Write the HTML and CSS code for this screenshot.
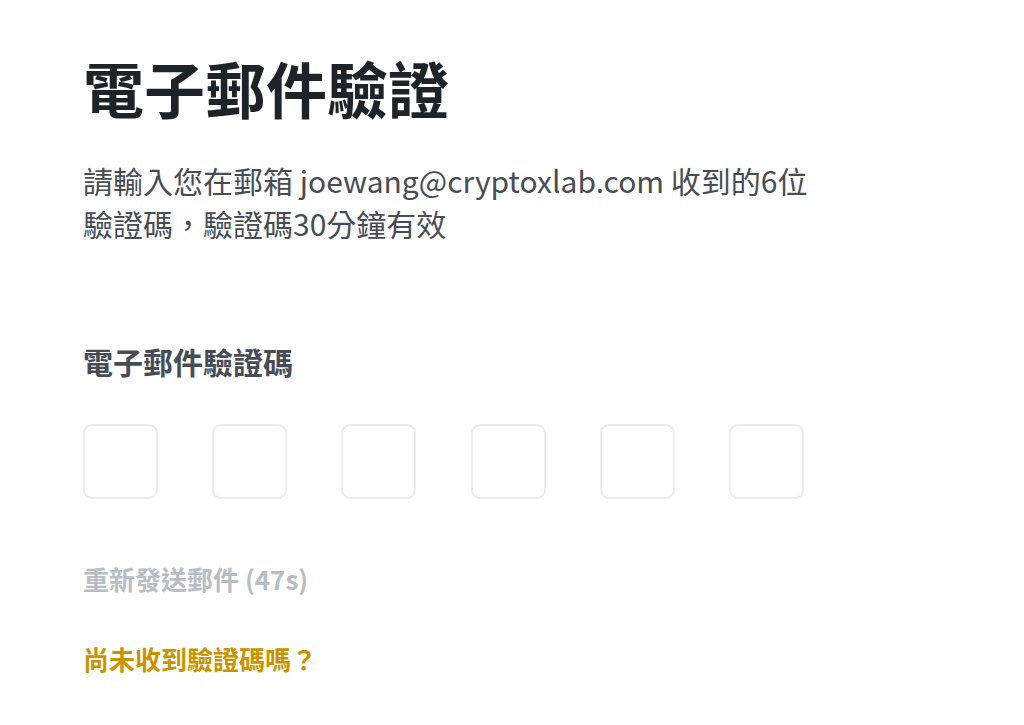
FILE: index.html
```html
<!DOCTYPE html>
<html lang="zh-Hant">
<head>
    <meta charset="UTF-8">
    <meta name="viewport" content="width=device-width, initial-scale=1.0">
    <title>電子郵件驗證</title>
    <link rel="stylesheet" href="styles.css">
</head>
<body>

    <div class="verify-container">
        <h1 class="verify-title">電子郵件驗證</h1>
        <p class="verify-desc">請輸入您在郵箱 joewang@cryptoxlab.com 收到的6位驗證碼，驗證碼30分鐘有效</p>

        <div class="code-label">電子郵件驗證碼</div>
        <div class="code-inputs">
            <input class="code-box" type="text" maxlength="1">
            <input class="code-box" type="text" maxlength="1">
            <input class="code-box" type="text" maxlength="1">
            <input class="code-box" type="text" maxlength="1">
            <input class="code-box" type="text" maxlength="1">
            <input class="code-box" type="text" maxlength="1">
        </div>

        <div class="resend">重新發送郵件 (47s)</div>
        <a class="help-link" href="#">尚未收到驗證碼嗎？</a>
    </div>

</body>
</html>
```

FILE: styles.css
```css
body {
    font-family: 'Noto Sans CJK TC', sans-serif;
    background-color: #fff;
    margin: 0;
    padding: 0;
}

.verify-container {
    width: 721px;
    padding: 48px 0 0 83px;
}

.verify-title {
    font-size: 61px;
    line-height: 80px;
    font-weight: 700;
    color: #1e2329;
    margin: 0;
}

.verify-desc {
    width: 740px;
    font-size: 30px;
    line-height: 43px;
    color: #474d57;
    margin: 31px 0 0;
}

.code-label {
    font-size: 30px;
    line-height: 40px;
    font-weight: 600;
    color: #474d57;
    margin-top: 96px;
}

.code-inputs {
    display: flex;
    justify-content: space-between;
    margin-top: 43px;
}

.code-box {
    width: 75px;
    height: 75px;
    box-sizing: border-box;
    border: 2px solid #eaecef;
    border-radius: 9px;
    background-color: #fff;
    padding: 0;
    text-align: center;
    font-size: 30px;
    outline: none;
}

.resend {
    font-size: 26px;
    line-height: 36px;
    font-weight: 600;
    color: #b7bdc6;
    margin-top: 62px;
}

.help-link {
    display: block;
    font-size: 26px;
    line-height: 36px;
    font-weight: 600;
    color: #c99400;
    text-decoration: none;
    margin-top: 44px;
}
```
